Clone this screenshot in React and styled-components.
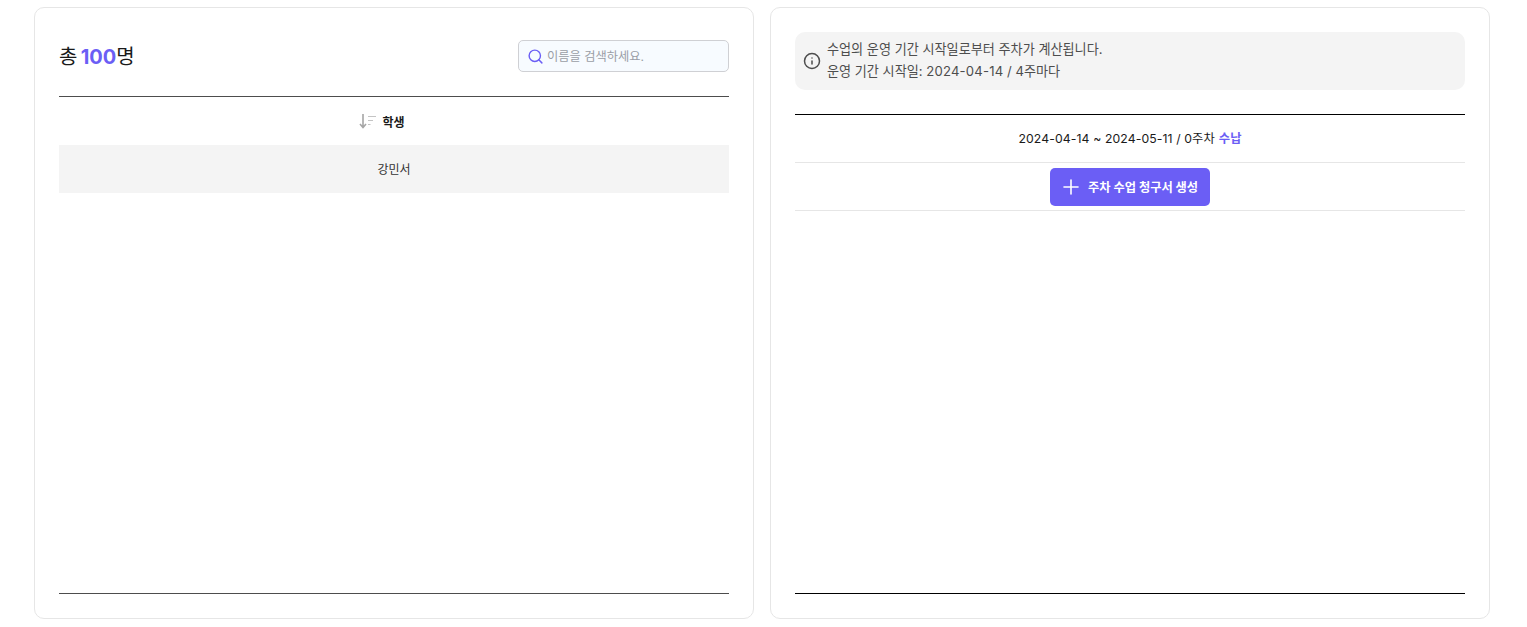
import styled, { createGlobalStyle } from 'styled-components'
import { Search, Info, Plus } from 'lucide-react'

const GlobalStyle = createGlobalStyle`
    html, body {
        margin: 0;
        padding: 0;
        background-color: #ffffff;
    }
    body {
        font-family: Inter, "Noto Sans CJK KR", sans-serif;
        color: #1a1a1a;
    }
`

const Page = styled.div`
    box-sizing: border-box;
    display: flex;
    gap: 16px;
    height: 627px;
    padding: 7px 37px 8px 34px;
`

const Card = styled.section`
    box-sizing: border-box;
    display: flex;
    flex-direction: column;
    width: 720px;
    height: 612px;
    padding: 24px;
    background-color: #fff;
    border: 1px solid #e6e6e6;
    border-radius: 10px;
`

const Header = styled.div`
    display: flex;
    justify-content: space-between;
    align-items: center;
    height: 48px;
    margin-bottom: 16px;
`

const Total = styled.div`
    padding-top: 2px;
    font-size: 20px;
    line-height: 28px;
    word-spacing: -2px;
    letter-spacing: -0.1px;
    color: #1a1a1a;
`

const Count = styled.strong`
    font-weight: 700;
    color: #6b5ef5;
`

const SearchBox = styled.label`
    box-sizing: border-box;
    display: flex;
    align-items: center;
    gap: 3px;
    width: 211px;
    height: 32px;
    padding: 0 8px;
    background-color: #f7fbff;
    border: 1px solid #cfd0d4;
    border-radius: 5px;
    color: #6b5ef5;
`

const SearchInput = styled.input`
    flex: 1;
    min-width: 0;
    padding: 0;
    border: none;
    outline: none;
    background: transparent;
    font-family: inherit;
    font-size: 12.25px;

    &::placeholder {
        color: #9a9ea6;
        opacity: 1;
    }
`

const List = styled.div`
    flex: 1;
    border-top: 1px solid ${props => props.lineColor};
    border-bottom: 1px solid ${props => props.lineColor};
`

const HeadCell = styled.div`
    display: flex;
    justify-content: center;
    align-items: center;
    gap: 5px;
    height: 48px;
    padding-right: 24px;
    font-size: 12px;
    font-weight: 700;
`

const StudentRow = styled.div`
    display: flex;
    justify-content: center;
    align-items: center;
    height: 46px;
    padding-bottom: 2px;
    background-color: #f4f4f4;
    font-size: 12px;
    color: #333;
`

const Notice = styled.div`
    display: flex;
    align-items: center;
    gap: 6px;
    height: 58px;
    margin-bottom: 24px;
    padding: 0 8px;
    background-color: #f4f4f4;
    border-radius: 10px;
    font-size: 13.125px;
    line-height: 21.5px;
    color: #4d4d4d;
`

const NoticeText = styled.div`
    margin-top: -1px;
`

const Digits = styled.span`
    letter-spacing: 0.2px;
`

const PeriodRow = styled.div`
    box-sizing: border-box;
    display: flex;
    justify-content: center;
    align-items: center;
    gap: 4px;
    height: 48px;
    padding-bottom: 2px;
    border-bottom: 1px solid #e6e6e6;
    font-size: 12.25px;
    letter-spacing: 0.1px;
`

const PayLink = styled.span`
    font-weight: 700;
    color: #6b5ef5;
`

const ActionRow = styled.div`
    box-sizing: border-box;
    display: flex;
    justify-content: center;
    align-items: center;
    height: 48px;
    border-bottom: 1px solid #e6e6e6;
`

const AddButton = styled.button`
    box-sizing: border-box;
    display: flex;
    align-items: center;
    gap: 5px;
    width: 160px;
    height: 38px;
    padding: 0 0 0 9px;
    border: none;
    border-radius: 5px;
    background-color: #6b5ef5;
    color: #fff;
    font-family: inherit;
    font-size: 12.25px;
    font-weight: 700;
`

const SortIcon = () => (
    <svg width="18" height="16" viewBox="0 0 18 16" fill="none">
        <path d="M4 1v13.5M1 11l3 3.5 3-3.5" stroke="#a6a6a6" strokeWidth="1.6" />
        <path d="M9 3.5h8M9 7.5h5M9 11.5h2.5" stroke="#c4c4c4" strokeWidth="1.2" />
    </svg>
)

const App = () => {
    return (
        <Page>
            <GlobalStyle />
            <Card>
                <Header>
                    <Total>총 <Count>100</Count>명</Total>
                    <SearchBox>
                        <Search size={17} strokeWidth={2} />
                        <SearchInput placeholder="이름을 검색하세요." />
                    </SearchBox>
                </Header>
                <List lineColor="#4d4d4d">
                    <HeadCell><SortIcon />학생</HeadCell>
                    <StudentRow>강민서</StudentRow>
                </List>
            </Card>
            <Card>
                <Notice>
                    <Info size={18} strokeWidth={2} color="#4d4d4d" />
                    <NoticeText>
                        수업의 운영 기간 시작일로부터 주차가 계산됩니다.<br />
                        운영 기간 시작일: <Digits>2024-04-14</Digits> / 4주마다
                    </NoticeText>
                </Notice>
                <List lineColor="#000">
                    <PeriodRow>
                        2024-04-14 ~ 2024-05-11 / 0주차 <PayLink>수납</PayLink>
                    </PeriodRow>
                    <ActionRow>
                        <AddButton><Plus size={24} strokeWidth={1.6} />주차 수업 청구서 생성</AddButton>
                    </ActionRow>
                </List>
            </Card>
        </Page>
    )
}

export default App
